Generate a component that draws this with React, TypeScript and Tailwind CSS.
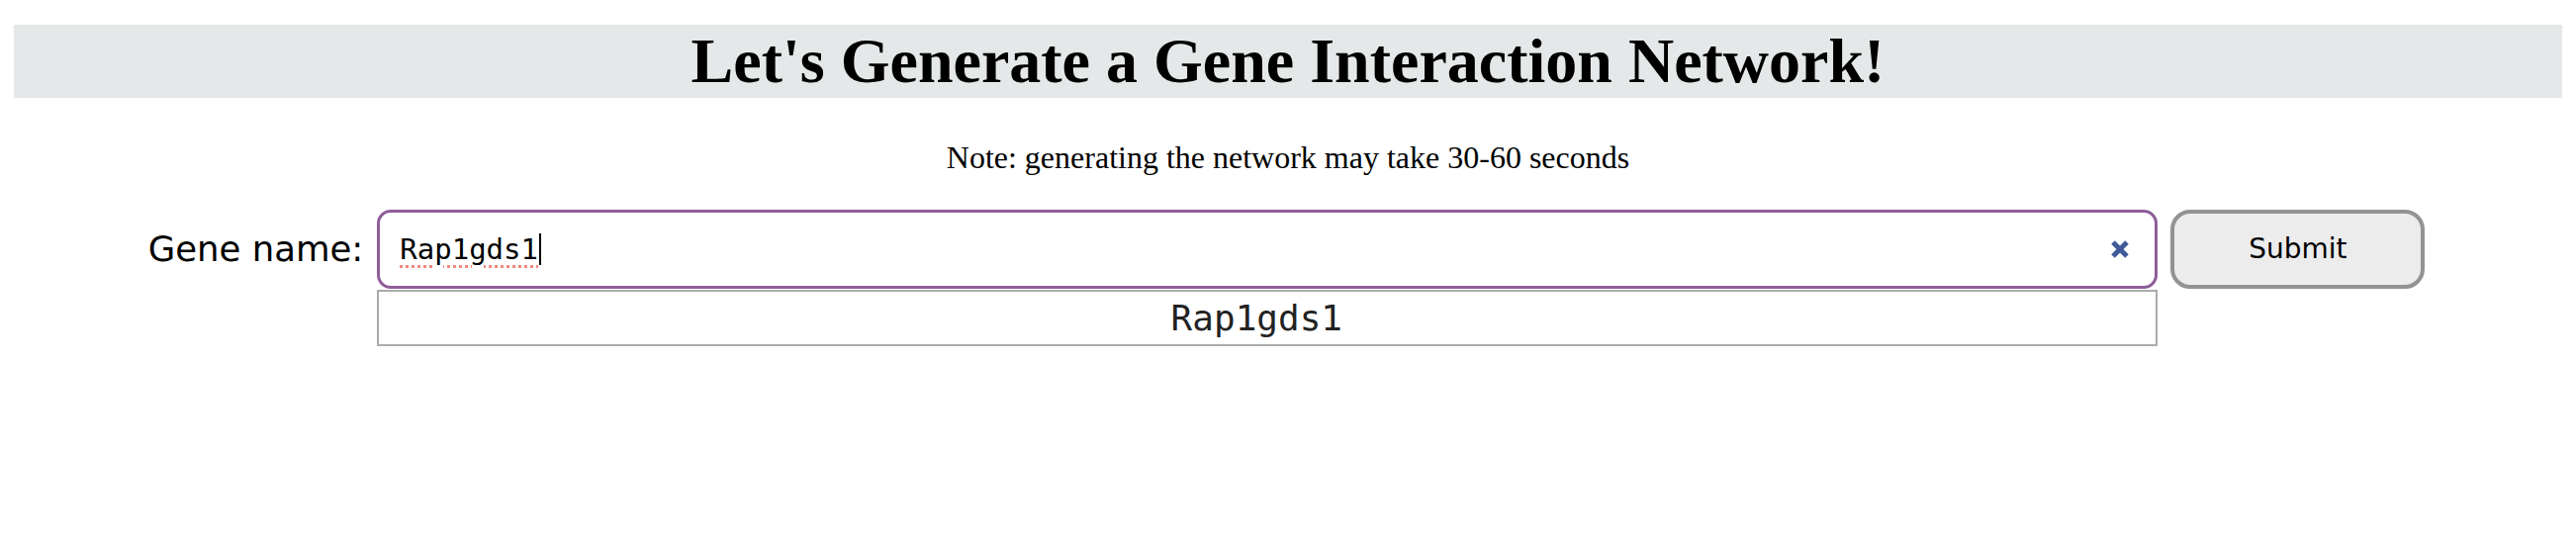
import React from "react";

export default function App() {
  return (
    <div className="w-[2604px] h-[548px] bg-white">
      <div className="mx-[14px] mt-[25px] h-[74px] bg-[#e5e8e9] flex items-center justify-center">
        <h1 className="text-[64px] leading-[74px] font-bold text-black [font-family:'Liberation_Serif','Times_New_Roman',serif]">
          Let's Generate a Gene Interaction Network!
        </h1>
      </div>
      <p className="mt-[41px] text-center text-[32px] leading-[38px] text-black [font-family:'Liberation_Serif','Times_New_Roman',serif]">
        Note: generating the network may take 30-60 seconds
      </p>
      <div className="mt-[34px] flex items-center justify-center pr-[3px]">
        <label className="mr-[14px] text-[35.5px] leading-[40px] text-black [font-family:'DejaVu_Sans',Verdana,sans-serif]">
          Gene name:
        </label>
        <div className="relative w-[1800px]">
          <div className="h-[80px] w-full rounded-[14px] border-[3px] border-[#8f5d99] bg-white flex items-center pl-[20px] pr-[25px]">
            <span className="text-[29px] leading-[34px] text-black underline decoration-dotted decoration-[#f08a80] decoration-[3px] underline-offset-[6px] [font-family:'DejaVu_Sans_Mono',Menlo,monospace]">
              Rap1gds1
            </span>
            <span className="ml-[1px] h-[32px] w-[2px] bg-black" />
            <span className="ml-auto flex items-center">
              <svg width="20" height="20" viewBox="0 0 20 20">
                <path d="M3 3 L17 17 M17 3 L3 17" stroke="#3f5a96" strokeWidth="5" strokeLinecap="butt" />
              </svg>
            </span>
          </div>
          <div className="absolute left-0 top-full mt-[1px] h-[57px] w-full border-2 border-[#ababab] bg-white flex items-center justify-center pr-[22px]">
            <span className="text-[36px] leading-[40px] text-[#222] [font-family:'DejaVu_Sans_Mono',Menlo,monospace]">
              Rap1gds1
            </span>
          </div>
        </div>
        <button className="ml-[13px] h-[80px] w-[257px] rounded-[20px] border-4 border-[#939393] bg-[#ececec] text-[28px] leading-[34px] text-black [font-family:'DejaVu_Sans',Verdana,sans-serif]">
          Submit
        </button>
      </div>
    </div>
  );
}
